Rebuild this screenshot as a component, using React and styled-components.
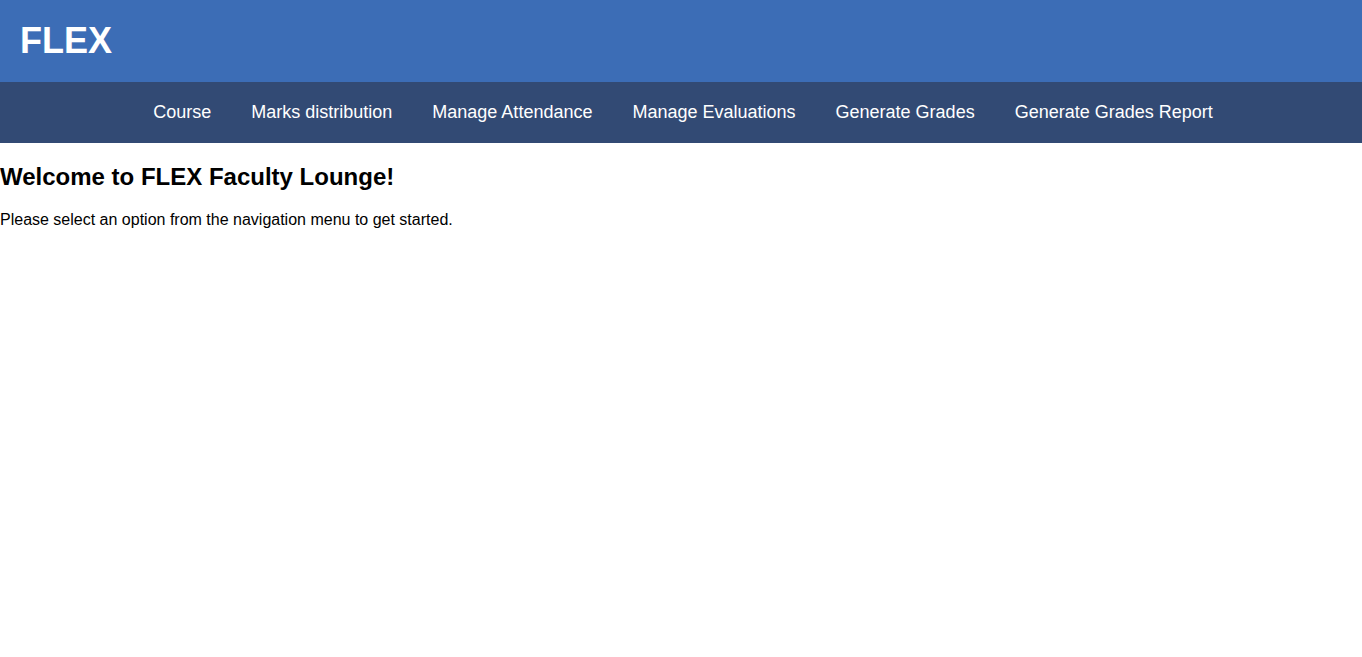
import React from 'react';
import styled, {createGlobalStyle} from 'styled-components';

const GlobalStyle = createGlobalStyle`
    body {
        margin: 0;
        font-family: "Liberation Sans", Arial, sans-serif;
        background: #ffffff;
    }
`;

const Header = styled.header`
    background: #3c6db6;
    padding: 20px;
    height: 42px;
    display: flex;
    align-items: center;
`;

const Logo = styled.h1`
    margin: 0;
    color: #ffffff;
    font-size: 36px;
    font-weight: bold;
    line-height: 42px;
`;

const Nav = styled.nav`
    background: #324a74;
    display: flex;
    justify-content: center;
    padding: 20px 0 20px 4px;
`;

const NavLink = styled.a`
    color: #ffffff;
    font-size: 18px;
    line-height: 21px;
    padding: 0 20px;
    text-decoration: none;
    cursor: pointer;
`;

const Title = styled.h2`
    font-size: 24px;
    margin: 20px 0;
    color: #000;
`;

const Text = styled.p`
    font-size: 16px;
    margin: 16px 0;
    color: #000;
`;

const links = [
    'Course',
    'Marks distribution',
    'Manage Attendance',
    'Manage Evaluations',
    'Generate Grades',
    'Generate Grades Report'
];

export default function App() {
    return (
        <>
            <GlobalStyle />
            <Header>
                <Logo>FLEX</Logo>
            </Header>
            <Nav>
                {links.map(l => (
                    <NavLink key={l}>{l}</NavLink>
                ))}
            </Nav>
            <main>
                <Title>Welcome to FLEX Faculty Lounge!</Title>
                <Text>Please select an option from the navigation menu to get started.</Text>
            </main>
        </>
    );
}
